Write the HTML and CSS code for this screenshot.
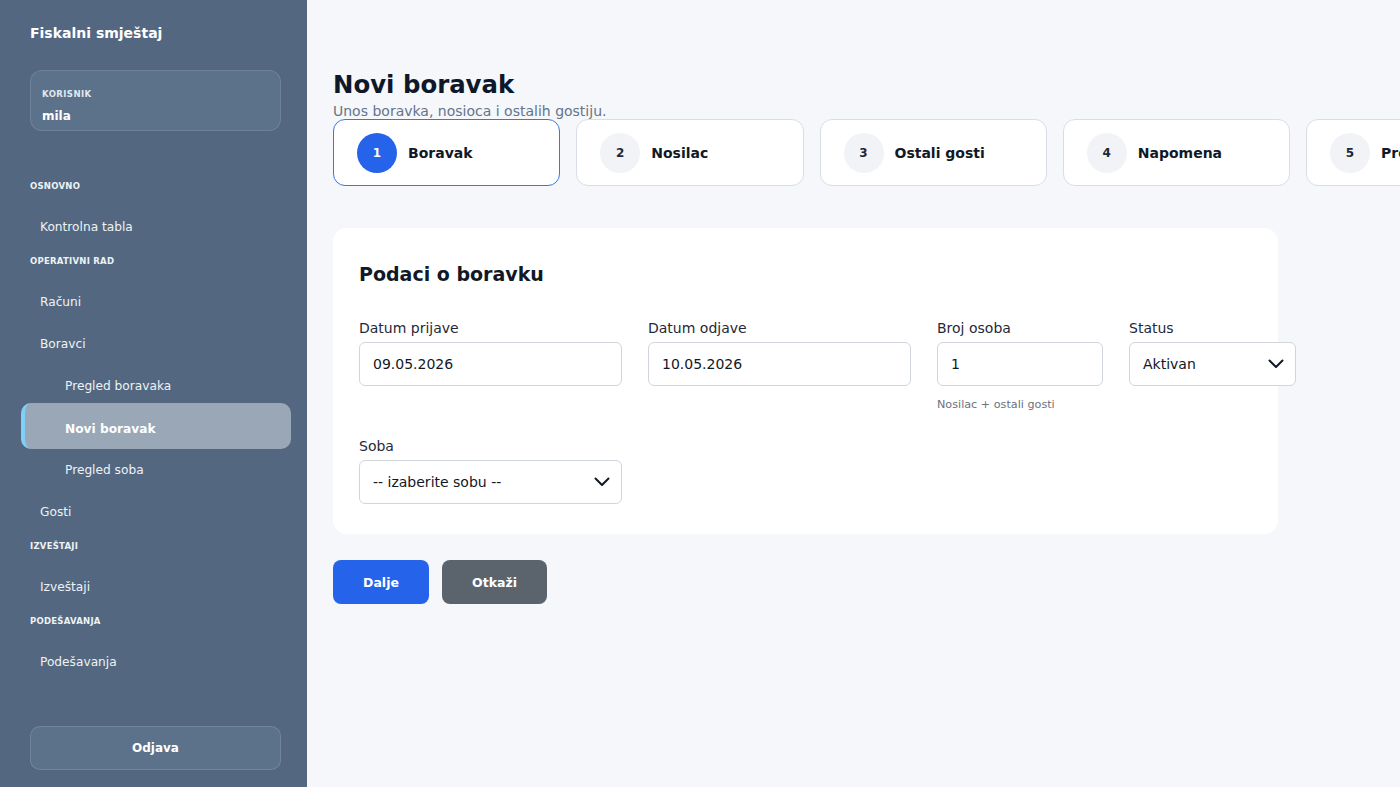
FILE: index.html
```html
<!DOCTYPE html>
<html lang="sr">
<head>
	<meta charset="UTF-8">
	<title>Novi boravak - Fiskalni smještaj</title>
	<link rel="stylesheet" href="styles.css">
</head>
<body>
	<aside class="sidebar">
		<div class="brand">Fiskalni smještaj</div>
		<div class="user-box">
			<div class="user-label">Korisnik</div>
			<div class="user-name">mila</div>
		</div>

		<nav class="nav">
			<div class="nav-section">Osnovno</div>
			<a href="#" class="nav-item">Kontrolna tabla</a>

			<div class="nav-section">Operativni rad</div>
			<a href="#" class="nav-item">Računi</a>
			<a href="#" class="nav-item">Boravci</a>
			<a href="#" class="nav-item sub">Pregled boravaka</a>
			<a href="#" class="nav-item sub active">Novi boravak</a>
			<a href="#" class="nav-item sub">Pregled soba</a>
			<a href="#" class="nav-item">Gosti</a>

			<div class="nav-section">Izveštaji</div>
			<a href="#" class="nav-item">Izveštaji</a>

			<div class="nav-section">Podešavanja</div>
			<a href="#" class="nav-item">Podešavanja</a>
		</nav>

		<button class="logout">Odjava</button>
	</aside>

	<main class="main">
		<h1 class="page-title">Novi boravak</h1>
		<p class="page-sub">Unos boravka, nosioca i ostalih gostiju.</p>

		<div class="steps">
			<div class="step active"><span class="step-num">1</span><span class="step-name">Boravak</span></div>
			<div class="step"><span class="step-num">2</span><span class="step-name">Nosilac</span></div>
			<div class="step"><span class="step-num">3</span><span class="step-name">Ostali gosti</span></div>
			<div class="step"><span class="step-num">4</span><span class="step-name">Napomena</span></div>
			<div class="step"><span class="step-num">5</span><span class="step-name">Pregled</span></div>
		</div>

		<section class="card">
			<h2 class="card-title">Podaci o boravku</h2>
			<div class="form-grid">
				<div class="field">
					<label>Datum prijave</label>
					<input class="input" type="text" value="09.05.2026">
				</div>
				<div class="field">
					<label>Datum odjave</label>
					<input class="input" type="text" value="10.05.2026">
				</div>
				<div class="field">
					<label>Broj osoba</label>
					<input class="input" type="text" value="1">
					<div class="hint">Nosilac + ostali gosti</div>
				</div>
				<div class="field">
					<label>Status</label>
					<div class="input select">
						<span>Aktivan</span>
						<svg width="16" height="10" viewBox="0 0 16 10"><path d="M1.5 1.5 L8 8 L14.5 1.5" fill="none" stroke="#111827" stroke-width="2" stroke-linecap="round" stroke-linejoin="round"/></svg>
					</div>
				</div>
				<div class="field">
					<label>Soba</label>
					<div class="input select">
						<span>-- izaberite sobu --</span>
						<svg width="16" height="10" viewBox="0 0 16 10"><path d="M1.5 1.5 L8 8 L14.5 1.5" fill="none" stroke="#111827" stroke-width="2" stroke-linecap="round" stroke-linejoin="round"/></svg>
					</div>
				</div>
			</div>
		</section>

		<div class="actions">
			<button class="btn btn-primary">Dalje</button>
			<button class="btn btn-secondary">Otkaži</button>
		</div>
	</main>
</body>
</html>
```

FILE: styles.css
```css
*{margin: 0;padding: 0;box-sizing: border-box;text-decoration: none;}
html,body{height: 100%;}
body{display: flex;overflow: hidden;background: #f5f7fa;font-family: "DejaVu Sans", "Liberation Sans", sans-serif;color: #0f172a;}

/* sidebar */
.sidebar{width: 307px;flex-shrink: 0;height: 100vh;background: #536880;color: #eef2f6;
	display: flex;flex-direction: column;padding: 24px 26px 17px 30px;}
.brand{font-size: 14px;font-weight: bold;line-height: 18px;color: #fff;}
.user-box{margin-top: 28px;height: 61px;border-radius: 12px;background: #5b728a;border: 1px solid rgba(255,255,255,.12);
	padding: 17px 11px 0;}
.user-label{font-size: 8.5px;font-weight: bold;letter-spacing: .05em;text-transform: uppercase;color: #e2e8f0;line-height: 12px;}
.user-name{margin-top: 8px;font-size: 12px;font-weight: bold;color: #fff;line-height: 16px;}

.nav{display: flex;flex-direction: column;margin: 50px -10px 0 -9px;}
.nav-section{font-size: 8.5px;font-weight: bold;letter-spacing: .03em;text-transform: uppercase;color: #eef2f6;
	line-height: 11px;padding-left: 9px;margin: 8px 0 14px;}
.nav-section:first-child{margin-top: 0;}
.nav-item{display: flex;align-items: center;height: 42px;padding-left: 19px;font-size: 12.2px;color: #eef2f6;
	border-radius: 10px;}
.nav-item.sub{padding-left: 44px;}
/* aktivna stavka je malo viša, proširena prema gore */
.nav-item.active{height: 46px;margin-top: -4px;padding-top: 6px;background: #99a7b7;border-left: 4px solid #7fd0f7;
	padding-left: 40px;font-weight: bold;color: #fff;}

.logout{margin-top: auto;height: 44px;border-radius: 10px;background: #5b728a;border: 1px solid rgba(255,255,255,.14);
	color: #fff;font: bold 12px "DejaVu Sans", sans-serif;}

/* main */
.main{flex: 1;min-width: 0;padding: 71px 0 26px 26px;}
.page-title{font-size: 24.4px;line-height: 28px;font-weight: bold;color: #0f172a;}
.page-sub{margin-top: 5px;font-size: 14px;line-height: 15px;color: #64748b;}

.steps{display: flex;gap: 16px;}
.step{flex-shrink: 0;width: 227.25px;height: 67px;display: flex;align-items: center;gap: 11px;padding-left: 23px;
	background: #fff;border: 1px solid #d9dee5;border-radius: 12px;}
.step-num{width: 40px;height: 40px;border-radius: 50%;background: #f1f3f6;display: flex;align-items: center;justify-content: center;
	font-size: 12px;font-weight: bold;color: #1f2937;}
.step-name{font-size: 14px;font-weight: bold;color: #111827;}
.step.active{border: 1.5px solid #3677ea;}
.step.active .step-num{background: #2563eb;color: #fff;}

.card{margin-top: 42px;max-width: 945px;background: #fff;border-radius: 14px;padding: 26px 26px 30px;}
.card-title{margin-top: 10px;font-size: 19px;line-height: 21px;font-weight: bold;color: #111827;}
.form-grid{margin-top: 35px;display: grid;grid-template-columns: 263px 263px 166px 167px;column-gap: 26px;row-gap: 27px;}
.field label{display: block;font-size: 14px;line-height: 16px;color: #1f2937;margin-bottom: 6px;}
.input{display: block;width: 100%;height: 44px;border: 1px solid #d1d6dd;border-radius: 6px;background: #fff;
	padding: 0 13px;font: 14px "DejaVu Sans", sans-serif;color: #111827;outline: none;}
.select{display: flex;align-items: center;justify-content: space-between;padding-right: 11px;}
.hint{margin-top: 12px;font-size: 11.2px;line-height: 13px;color: #6b7280;}

.actions{margin-top: 26px;display: flex;gap: 13px;}
.btn{height: 44px;border: none;border-radius: 8px;color: #fff;font: bold 12.5px "DejaVu Sans", sans-serif;}
.btn-primary{width: 96px;background: #2563eb;}
.btn-secondary{width: 105px;background: #5b636d;}
```
